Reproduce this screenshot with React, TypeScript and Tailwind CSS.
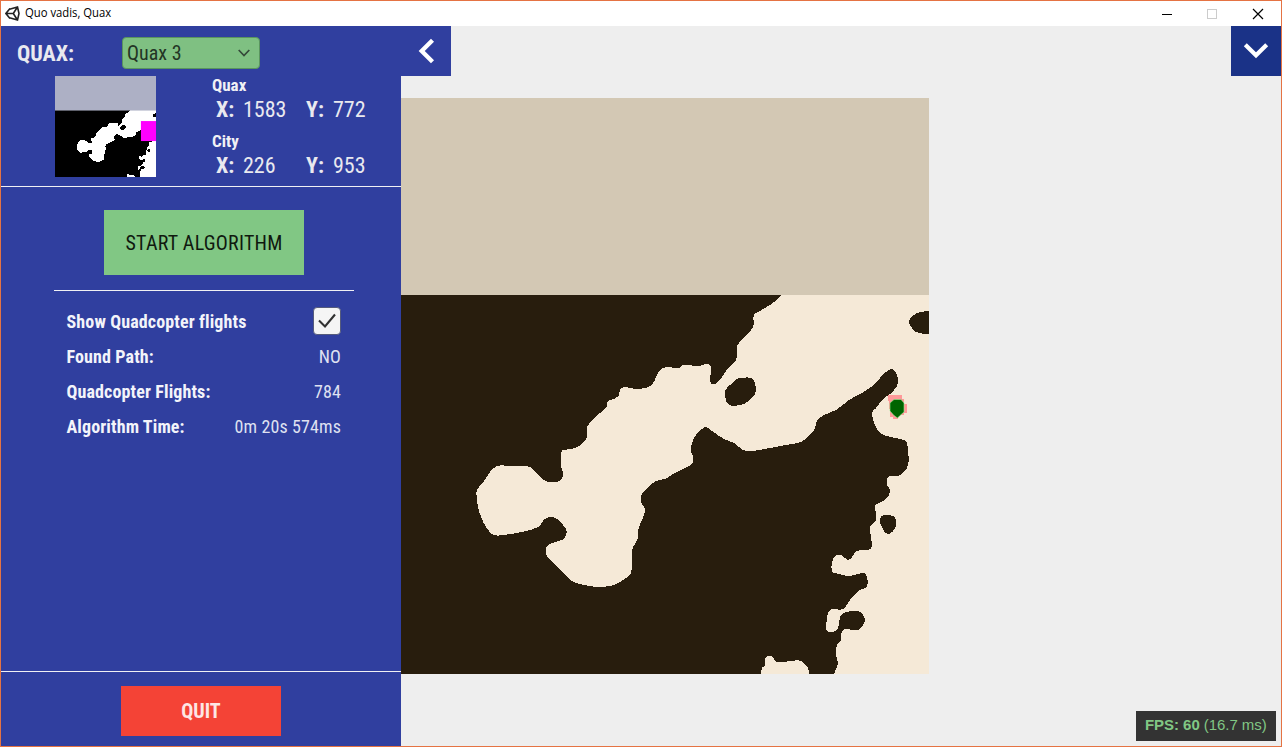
import React from "react";

const CAVE_OUTLINES = [
  "790 286 785 291 781 295 773 303 770 305 760 311 754 315 753 327 742 340 737 346 736 360 728 368 722 377 716 384 712 384 710 381 711 370 710 365 705 364 699 366 683 365 679 368 668 367 663 368 659 371 656 377 652 385 645 388 636 389 624 387 620 390 619 395 614 399 608 401 607 407 600 413 591 422 587 427 587 437 582 444 572 449 563 450 561 453 561 467 563 473 561 480 556 482 548 482 541 478 534 470 527 466 512 466 497 466 490 472 484 481 477 490 477 500 479 511 482 519 486 527 494 535 510 534 522 532 538 527 545 519 552 517 557 519 566 529 566 535 562 540 552 543 546 548 547 556 556 565 567 577 576 583 590 586 600 587 614 585 623 580 631 573 632 550 638 538 638 530 642 520 645 510 641 502 641 496 645 490 656 481 665 479 673 474 685 468 692 464 693 456 691 452 692 443 696 435 702 429 706 427 712 431 724 439 734 443 743 450 752 451 770 448 786 445 801 442 811 434 815 428 817 421 824 415 836 410 849 400 860 394 871 387 880 378 886 372 892 369 896 373 898 379 897 386 890 394 883 399 876 408 872 413 875 425 880 433 891 437 904 440 907 443 908 465 900 475 888 477 887 484 890 491 887 498 881 502 875 506 876 513 876 520 870 527 872 546 868 550 857 551 852 557 848 560 845 558 841 555 834 557 832 571 839 574 850 576 862 573 866 574 867 586 858 591 850 600 843 609 830 610 827 620 827 631 837 630 839 622 842 614 852 611 860 612 865 619 863 625 858 630 843 630 841 640 837 645 836 655 838 663 834 674 832 684 945 690 945 280",
  "726 400 725 391 730 385 737 379 740 378 751 378 755 383 755 394 747 402 741 405 729 405",
  "938 310 929 311 917 313 910 319 910 325 916 332 929 334 938 334",
  "880 519 884 515 893 516 896 520 895 528 888 534 882 527",
  "758 684 761 674 762 668 765 665 766 657 771 656 777 662 785 662 790 661 801 661 808 668 809 674 811 684",
];

// Closed smooth curve through every point; handles are limited by segment length.
function smooth(outline: string) {
  const n = outline.split(" ").map(Number);
  const pts: [number, number][] = [];
  for (let i = 0; i < n.length; i += 2) pts.push([n[i], n[i + 1]]);
  const at = (i: number) => pts[(i + pts.length) % pts.length];
  const handle = (i: number, length: number) => {
    const dx = at(i + 1)[0] - at(i - 1)[0];
    const dy = at(i + 1)[1] - at(i - 1)[1];
    const k = (length * 0.33) / (Math.hypot(dx, dy) || 1);
    return [dx * k, dy * k];
  };
  let d = `M${pts[0].join(" ")}`;
  pts.forEach((p, i) => {
    const q = at(i + 1);
    const length = Math.hypot(q[0] - p[0], q[1] - p[1]);
    const a = handle(i, length);
    const b = handle(i + 1, length);
    d += `C${p[0] + a[0]} ${p[1] + a[1]} ${q[0] - b[0]} ${q[1] - b[1]} ${q[0]} ${q[1]}`;
  });
  return d + "Z";
}

const CAVE = CAVE_OUTLINES.map(smooth).join("");

function Terrain({ viewBox, sky, rock, cave, className, children }: {
  viewBox: string; sky: string; rock: string; cave: string; className: string; children?: React.ReactNode;
}) {
  return (
    <svg viewBox={viewBox} preserveAspectRatio="none" className={className}>
      <rect x="353" y="98" width="576" height="576" fill={rock} />
      <path d={CAVE} fill={cave} fillRule="evenodd" shapeRendering="crispEdges" />
      <rect x="353" y="98" width="576" height="197" fill={sky} />
      {children}
    </svg>
  );
}

function Coords({ title, x, y }: { title: string; x: string; y: string }) {
  return (
    <div className="h-[55.5px]">
      <div className="h-[19px] text-[17px] leading-[19px] font-bold text-[#f1f1f5]">{title}</div>
      <div className="flex h-7 pt-px pl-[4px] text-[22px] leading-7 text-[#e9e9ef]">
        <span className="w-[27px] font-bold">X:</span>
        <span className="w-[63px]">{x}</span>
        <span className="w-[27px] font-bold">Y:</span>
        <span>{y}</span>
      </div>
    </div>
  );
}

function Stat({ label, children }: { label: string; children: React.ReactNode }) {
  return (
    <div className="flex h-[35px] items-center justify-between text-[18px] tracking-[0.12px] text-[#dfe1f1]">
      <span className="font-bold text-[#f3f4fa]">{label}</span>
      {children}
    </div>
  );
}

export default function App() {
  return (
    <div className="flex h-[747px] w-[1282px] flex-col overflow-hidden border border-[#e57343] bg-[#eeeeee] font-['Roboto_Condensed',Roboto,sans-serif] [font-stretch:75%] whitespace-nowrap">
      <header className="flex h-[25px] shrink-0 items-center bg-white pl-[4px]">
        <svg viewBox="0 0 15 15" className="h-[15px] w-[15px]" fill="none" stroke="#222" strokeWidth="1.6">
          <path d="M4.5 3.2L12.5 1L14 7.5L12.5 14L4.5 11.8M5 2.6L0.9 7.5L5 12.4M0.9 7.5H8.3L12.5 1M8.3 7.5L12.5 14" />
        </svg>
        <span className="ml-[5px] inline-block origin-left scale-x-[0.94] pb-px font-['Open_Sans',sans-serif] text-[12px] leading-6 text-black [font-stretch:normal]">Quo vadis, Quax</span>
        <svg viewBox="1160 6 106 14" className="mr-[15px] ml-auto h-[14px] w-[106px]" fill="none" shapeRendering="crispEdges">
          <path d="M1162 13.5H1172" stroke="#000" />
          <rect x="1207.5" y="8.5" width="9" height="9" stroke="#ccc" />
          <path d="M1253 8L1263 18M1263 8L1253 18" stroke="#000" strokeWidth="1.2" shapeRendering="auto" />
        </svg>
      </header>
      <div className="flex h-[720px]">
        <aside className="flex w-[400px] shrink-0 flex-col bg-[#303f9f]">
          <div className="flex h-[50px] items-center pt-[4px] pl-[16px]">
            <span className="w-[105px] text-[22px] font-bold text-[#e9e9ef]">QUAX:</span>
            <button className="flex h-8 w-[138px] items-center justify-between rounded-[4px] border border-[#5a955e] bg-[#7fc082] pr-[9px] pl-[4px] text-[20px] text-[#233525]">
              <span>Quax 3</span>
              <svg viewBox="0 0 12 8" className="h-2 w-3" fill="none" stroke="#35483a" strokeWidth="1.7"><path d="M0.7 1L6 6.5L11.3 1" /></svg>
            </button>
          </div>
          <div className="flex h-[111px] border-b border-[#f0f0f4] pl-[54px]">
            <Terrain viewBox="353 98 576 576" sky="#adb0c5" rock="#000" cave="#fff" className="h-[101px] w-[101px]">
              <rect x="843" y="355" width="86" height="114" fill="#f0f" />
            </Terrain>
            <div className="ml-[56px]">
              <Coords title="Quax" x="1583" y="772" />
              <Coords title="City" x="226" y="953" />
            </div>
          </div>
          <div className="mt-[23px] ml-[53px] w-[300px]">
            <div className="flex h-[81px] justify-center border-b border-[#f0f0f4]">
              <button className="h-[65px] w-[200px] bg-[#81c784] text-[20px] tracking-[0.25px] text-[#10190f]">START ALGORITHM</button>
            </div>
            <div className="pt-[13px] pr-[13px] pl-[12.5px]">
              <Stat label="Show Quadcopter flights">
                <span className="-mt-px flex h-7 w-7 items-center justify-center rounded-[4px] border border-[#555b7c] bg-[#f5f5f5]">
                  <svg viewBox="0 0 18 16" className="h-4 w-[18px]" fill="none" stroke="#323232" strokeWidth="2.1"><path d="M1 7.5L7 13.5L17 1.5" /></svg>
                </span>
              </Stat>
              <Stat label="Found Path:"><span>NO</span></Stat>
              <Stat label="Quadcopter Flights:"><span>784</span></Stat>
              <Stat label="Algorithm Time:"><span>0m 20s 574ms</span></Stat>
            </div>
          </div>
          <div className="mt-auto flex h-[75px] justify-center border-t border-[#f0f0f4] pt-[14px]">
            <button className="h-[50px] w-[160px] bg-[#f44336] text-[20px] font-bold text-[#fde6e4]">QUIT</button>
          </div>
        </aside>
        <main className="flex grow flex-col">
          <div className="flex h-[50px] shrink-0 justify-between">
            <button className="flex h-[50px] w-[50px] items-center justify-center bg-[#303f9f]">
              <svg viewBox="401 26 50 50" className="h-[50px] w-[50px]" fill="none" stroke="#fff" strokeWidth="4.3"><path d="M432.5 40.2L421.7 51L432.5 61.8" /></svg>
            </button>
            <button className="flex h-[50px] w-[50px] items-center justify-center bg-[#1a3287]">
              <svg viewBox="1231 26 50 50" className="h-[50px] w-[50px]" fill="none" stroke="#fff" strokeWidth="4.2"><path d="M1245.3 44.7L1256 55.2L1266.7 44.7" /></svg>
            </button>
          </div>
          <Terrain viewBox="401 98 528 576" sky="#d3c8b4" rock="#281d0d" cave="#f5e9d7" className="mt-[22px] h-[576px] w-[528px] shrink-0">
            <path d="M888 395H902V399H904V404H907V413H904V415H898V419H893V417H890V409H889V401H888Z" fill="#ff9999" />
            <path d="M894 399.5H901L904 403V412L900 415.5L897.5 418L894 415.5L890 411V403Z" fill="#006400" stroke="#90ee90" strokeWidth="0.6" />
          </Terrain>
          <div className="mt-auto mr-[5px] mb-[5px] flex h-[30px] w-[140px] items-center self-end bg-[#333] pb-[2px] pl-[9px] font-['Liberation_Sans',Arial,sans-serif] text-[15px] leading-[28px] tracking-[-0.05px] text-[#81c784]">
            <span><b>FPS: 60</b> (16.7 ms)</span>
          </div>
        </main>
      </div>
    </div>
  );
}
